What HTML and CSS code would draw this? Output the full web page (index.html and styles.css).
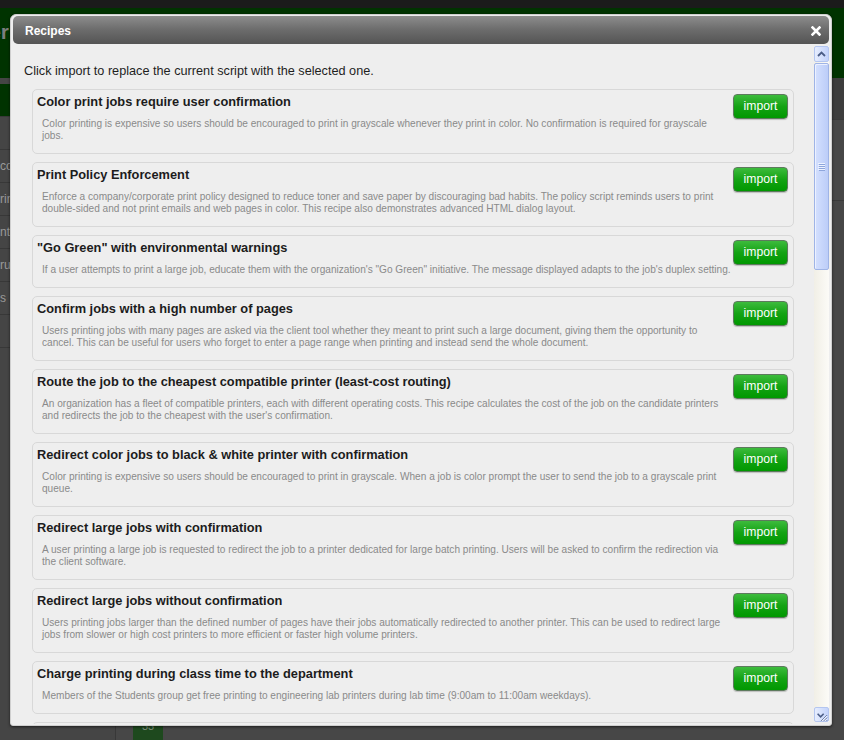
FILE: index.html
```
<!DOCTYPE html>
<html>
<head>
<meta charset="utf-8">
<title>Recipes</title>
<link rel="stylesheet" href="styles.css">
</head>
<body>
<div class="app">
  <div class="topbar"></div>
  <header class="masthead">
    <div class="logo"><span>PaperCut Printer</span></div>
  </header>
  <div class="main">
    <nav class="sidenav">
      <div class="nav-item active"></div>
      <div class="nav-item"></div>
      <div class="nav-item">co</div>
      <div class="nav-item">rin</div>
      <div class="nav-item">nte</div>
      <div class="nav-item">ru</div>
      <div class="nav-item">s</div>
      <div class="nav-item"></div>
    </nav>
    <section class="workspace">
      <div class="ws-head"></div>
      <div class="ws-row"></div>
      <div class="day-cell">33</div>
    </section>
  </div>
</div>

<div class="dialog">
  <div class="dialog-title">
    <span class="dialog-name">Recipes</span>
    <svg class="close-icon" width="10" height="10" viewBox="0 0 10 10"><path d="M1.5 1.5 L8.5 8.5 M8.5 1.5 L1.5 8.5" stroke="#fff" stroke-width="2.6" stroke-linecap="square" fill="none"/></svg>
  </div>
  <div class="dialog-body">
    <div class="recipes">
      <p class="intro">Click import to replace the current script with the selected one.</p>
      <div class="recipe-list">
        <div class="recipe">
          <div class="recipe-text">
            <div class="recipe-title">Color print jobs require user confirmation</div>
            <div class="recipe-desc">Color printing is expensive so users should be encouraged to print in grayscale whenever they print in color. No confirmation is required for grayscale<br>jobs.</div>
          </div>
          <button class="import-btn">import</button>
        </div>
        <div class="recipe">
          <div class="recipe-text">
            <div class="recipe-title">Print Policy Enforcement</div>
            <div class="recipe-desc">Enforce a company/corporate print policy designed to reduce toner and save paper by discouraging bad habits. The policy script reminds users to print<br>double-sided and not print emails and web pages in color. This recipe also demonstrates advanced HTML dialog layout.</div>
          </div>
          <button class="import-btn">import</button>
        </div>
        <div class="recipe">
          <div class="recipe-text">
            <div class="recipe-title">"Go Green" with environmental warnings</div>
            <div class="recipe-desc">If a user attempts to print a large job, educate them with the organization's "Go Green" initiative. The message displayed adapts to the job's duplex setting.</div>
          </div>
          <button class="import-btn">import</button>
        </div>
        <div class="recipe">
          <div class="recipe-text">
            <div class="recipe-title">Confirm jobs with a high number of pages</div>
            <div class="recipe-desc">Users printing jobs with many pages are asked via the client tool whether they meant to print such a large document, giving them the opportunity to<br>cancel. This can be useful for users who forget to enter a page range when printing and instead send the whole document.</div>
          </div>
          <button class="import-btn">import</button>
        </div>
        <div class="recipe">
          <div class="recipe-text">
            <div class="recipe-title">Route the job to the cheapest compatible printer (least-cost routing)</div>
            <div class="recipe-desc">An organization has a fleet of compatible printers, each with different operating costs. This recipe calculates the cost of the job on the candidate printers<br>and redirects the job to the cheapest with the user's confirmation.</div>
          </div>
          <button class="import-btn">import</button>
        </div>
        <div class="recipe">
          <div class="recipe-text">
            <div class="recipe-title">Redirect color jobs to black &amp; white printer with confirmation</div>
            <div class="recipe-desc">Color printing is expensive so users should be encouraged to print in grayscale. When a job is color prompt the user to send the job to a grayscale print<br>queue.</div>
          </div>
          <button class="import-btn">import</button>
        </div>
        <div class="recipe">
          <div class="recipe-text">
            <div class="recipe-title">Redirect large jobs with confirmation</div>
            <div class="recipe-desc">A user printing a large job is requested to redirect the job to a printer dedicated for large batch printing. Users will be asked to confirm the redirection via<br>the client software.</div>
          </div>
          <button class="import-btn">import</button>
        </div>
        <div class="recipe">
          <div class="recipe-text">
            <div class="recipe-title">Redirect large jobs without confirmation</div>
            <div class="recipe-desc">Users printing jobs larger than the defined number of pages have their jobs automatically redirected to another printer. This can be used to redirect large<br>jobs from slower or high cost printers to more efficient or faster high volume printers.</div>
          </div>
          <button class="import-btn">import</button>
        </div>
        <div class="recipe">
          <div class="recipe-text">
            <div class="recipe-title">Charge printing during class time to the department</div>
            <div class="recipe-desc">Members of the Students group get free printing to engineering lab printers during lab time (9:00am to 11:00am weekdays).</div>
          </div>
          <button class="import-btn">import</button>
        </div>
        <div class="recipe">
          <div class="recipe-text">
            <div class="recipe-title">Discount printing during off-peak hours</div>
            <div class="recipe-desc">Encourage users to print large jobs outside of peak hours by offering a discount.</div>
          </div>
          <button class="import-btn">import</button>
        </div>
      </div>
    </div>
    <div class="scrollbar">
      <div class="sb-btn">
        <svg width="9" height="6" viewBox="0 0 9 6"><path d="M1 5 L4.5 1.5 L8 5" stroke="#4b5d86" stroke-width="1.8" fill="none"/></svg>
      </div>
      <div class="sb-thumb">
        <svg width="7" height="8" viewBox="0 0 7 8"><path d="M0 0.5 H7 M0 2.5 H7 M0 4.5 H7 M0 6.5 H7" stroke="#eef3ff" stroke-width="1"/><path d="M1 1.5 H7 M1 3.5 H7 M1 5.5 H7 M1 7.5 H7" stroke="#8ea6dc" stroke-width="1"/></svg>
      </div>
      <div class="sb-track"></div>
      <div class="sb-btn sb-btn-down">
        <svg width="15" height="15" viewBox="0 0 15 15"><path d="M3 5.5 L6.5 9 L10 5.5" stroke="#4b5d86" stroke-width="1.8" fill="none"/><path d="M14 7 L7 14 M14 10 L10 14 M14 13 L13 14" stroke="#4b5d86" stroke-width="1" fill="none"/><path d="M14 8 L8 14 M14 11 L11 14" stroke="#ffffff" stroke-width="1" fill="none"/></svg>
      </div>
    </div>
  </div>
</div>
</body>
</html>
```
FILE: styles.css
```
html, body {
  margin: 0;
  padding: 0;
  height: 100%;
  overflow: hidden;
  background: #474747;
  font-family: "Liberation Sans", Arial, sans-serif;
}

.app {
  height: 100vh;
  display: flex;
  flex-direction: column;
}

.topbar {
  height: 8px;
  background: #1b1b1b;
  flex: none;
}

.masthead {
  height: 70px;
  flex: none;
  background: #003300;
  display: flex;
}

.logo {
  width: 9px;
  overflow: hidden;
  display: flex;
  justify-content: flex-end;
  padding-top: 12px;
}

.logo span {
  white-space: nowrap;
  color: #7d7d7d;
  font-weight: bold;
  font-size: 21px;
  line-height: 24px;
}

.main {
  flex: 1;
  display: flex;
  min-height: 0;
}

.sidenav {
  width: 115px;
  flex: none;
  border-right: 1px solid #383838;
  padding-top: 6px;
  background: #454545;
}

.nav-item {
  height: 32px;
  border-bottom: 1px solid #383838;
  color: #9a9a9a;
  font-size: 12px;
  line-height: 32px;
  white-space: nowrap;
}

.nav-item.active {
  background: #003300;
}

.workspace {
  flex: 1;
  display: flex;
  flex-direction: column;
  background: #474747;
}

.ws-head {
  height: 41px;
  border-bottom: 1px solid #3a3a3a;
  background: #3d3d3d;
}

.ws-row {
  height: 80px;
  border-bottom: 1px solid #3a3a3a;
}

.day-cell {
  margin-top: auto;
  margin-left: 17px;
  width: 30px;
  height: 22px;
  background: #1e491e;
  color: #7f8f7f;
  font-size: 11px;
  line-height: 16px;
  text-align: center;
  overflow: hidden;
}

/* dialog */
.dialog {
  position: absolute;
  left: 10px;
  top: 14px;
  width: 822px;
  height: 712px;
  box-sizing: border-box;
  border: 1px solid #cfcfcf;
  border-radius: 6px 6px 3px 3px;
  padding: 1px 2px;
  background: #eeeeee;
  display: flex;
  flex-direction: column;
  box-shadow: 0 1px 3px rgba(0, 0, 0, 0.6);
}

.dialog-title {
  height: 28px;
  flex: none;
  box-sizing: border-box;
  padding: 2px 8px 0 12px;
  border-radius: 5px;
  background: linear-gradient(#8d8d8d, #6e6e6e 45%, #545454);
  display: flex;
  align-items: center;
  justify-content: space-between;
}

.dialog-name {
  color: #ffffff;
  font-weight: bold;
  font-size: 12px;
}

.close-icon {
  display: block;
}

.dialog-body {
  flex: 1;
  display: flex;
  min-height: 0;
}

.recipes {
  flex: 1;
  overflow: hidden;
  padding: 20px 20px 0 11px;
}

.intro {
  margin: 0 0 10px 0;
  font-size: 12.7px;
  line-height: 15px;
  color: #1e1e1e;
}

.recipe-list {
  padding-left: 8px;
}

.recipe {
  display: flex;
  align-items: flex-start;
  border: 1px solid #d8d8d8;
  border-radius: 5px;
  padding: 4px 5px 11px 4px;
  margin-bottom: 8px;
  background: #eeeeee;
}

.recipe-text {
  flex: 1;
  min-width: 0;
}

.recipe-title {
  font-weight: bold;
  font-size: 12.8px;
  line-height: 16px;
  color: #1c1c1c;
  white-space: nowrap;
}

.recipe-desc {
  margin-top: 8px;
  padding-left: 5px;
  font-size: 10.1px;
  line-height: 12px;
  color: #8a8a8a;
  white-space: nowrap;
}

.import-btn {
  flex: none;
  width: 55px;
  height: 25px;
  margin-left: 5px;
  padding: 0;
  box-sizing: border-box;
  border: 1px solid #5d7a5d;
  border-radius: 4px;
  background: linear-gradient(#3dbb3d, #14a314 50%, #009800);
  color: #ffffff;
  font-family: "Liberation Sans", Arial, sans-serif;
  font-size: 12.2px;
  line-height: 23px;
  box-shadow: 0 1px 1px rgba(0, 0, 0, 0.2);
}

/* scrollbar */
.scrollbar {
  width: 15px;
  flex: none;
  margin: 2px 0;
  display: flex;
  flex-direction: column;
  background: linear-gradient(to right, #f1efe6, #fcfbf7);
}

.sb-btn {
  height: 16px;
  flex: none;
  box-sizing: border-box;
  border: 1px solid #b4c6f0;
  border-radius: 2px;
  background: linear-gradient(to right, #e6edfe, #c3d3fb);
  display: flex;
  align-items: center;
  justify-content: center;
}

.sb-thumb {
  height: 207px;
  flex: none;
  margin-top: 1px;
  box-sizing: border-box;
  border: 1px solid #9fb4e6;
  border-radius: 2px;
  background: linear-gradient(to right, #d4e0fe, #bccdf8);
  box-shadow: inset 1px 1px 0 #ecf1ff;
  display: flex;
  align-items: center;
  justify-content: center;
}

.sb-track {
  flex: 1;
}

.sb-btn-down {
  height: 15px;
  align-items: stretch;
  justify-content: stretch;
  padding: 0;
}

.sb-btn-down svg {
  display: block;
}
```
